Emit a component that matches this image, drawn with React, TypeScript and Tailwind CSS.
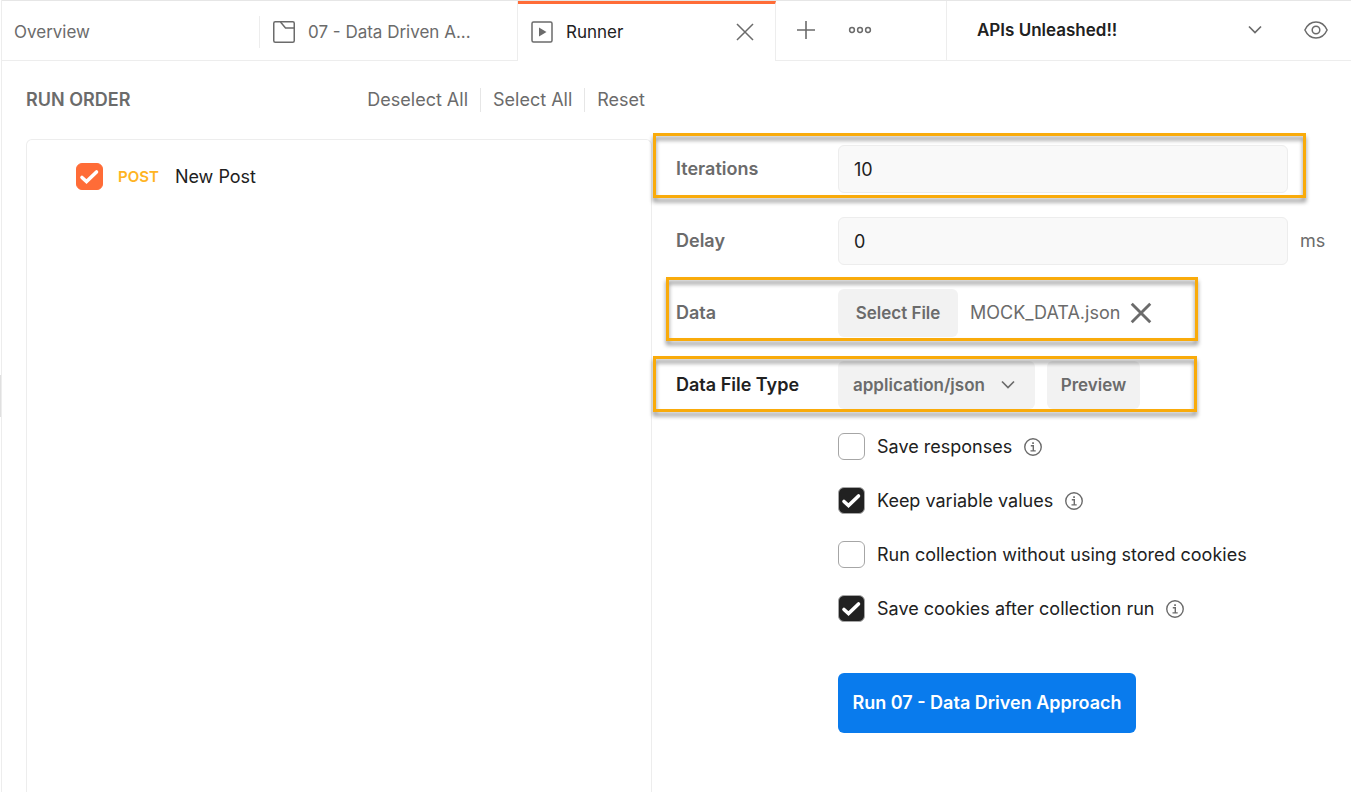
import { useState } from "react";
import type { ReactNode } from "react";
import clsx from "clsx";

type Option = {
  id: string;
  label: string;
  checked: boolean;
  info: boolean;
};

const OPTIONS: Option[] = [
  { id: "save-responses", label: "Save responses", checked: false, info: true },
  { id: "keep-variables", label: "Keep variable values", checked: true, info: true },
  { id: "no-cookies", label: "Run collection without using stored cookies", checked: false, info: false },
  { id: "save-cookies", label: "Save cookies after collection run", checked: true, info: true },
];

function CollectionIcon() {
  return (
    <svg width="22" height="22" viewBox="0 0 22 22" fill="none" stroke="#6b6b6b" strokeWidth="1.5" className="shrink-0">
      <rect x="0.75" y="0.75" width="20.5" height="20.5" rx="1.5" />
      <path d="M7.5 1L12.5 7H21" />
    </svg>
  );
}

function RunnerIcon() {
  return (
    <svg width="22" height="22" viewBox="0 0 22 22" fill="none" className="shrink-0">
      <rect x="1" y="1" width="20" height="20" rx="1.5" stroke="#6b6b6b" strokeWidth="1.5" />
      <path d="M8 6.5L15.5 11L8 15.5Z" fill="#6b6b6b" />
    </svg>
  );
}

function CloseIcon({ size, stroke }: { size: number; stroke: number }) {
  return (
    <svg width={size} height={size} viewBox="0 0 20 20" fill="none" stroke="#6b6b6b" strokeWidth={stroke} strokeLinecap="square">
      <path d="M2.5 2.5L17.5 17.5M17.5 2.5L2.5 17.5" />
    </svg>
  );
}

function ChevronIcon() {
  return (
    <svg width="14" height="10" viewBox="0 0 14 10" fill="none" stroke="#6b6b6b" strokeWidth="1.7">
      <path d="M1 1.5L7 7.5L13 1.5" />
    </svg>
  );
}

function EyeIcon() {
  return (
    <svg width="24" height="18" viewBox="0 0 24 18" fill="none" stroke="#6b6b6b" strokeWidth="1.5">
      <path d="M0.9 9C3.2 4 7.2 1 12 1S20.8 4 23.1 9C20.8 14 16.8 17 12 17S3.2 14 0.9 9Z" />
      <circle cx="12" cy="9" r="3.8" />
    </svg>
  );
}

function InfoIcon() {
  return (
    <svg width="18" height="18" viewBox="0 0 18 18" fill="none" stroke="#6b6b6b" className="shrink-0">
      <circle cx="9" cy="9" r="8.25" strokeWidth="1.4" />
      <path d="M6.8 7.8H9.3V12.7M6.5 12.9H11.7" strokeWidth="1.4" />
      <path d="M8.2 5.2H9.9" strokeWidth="1.7" />
    </svg>
  );
}

function Checkbox({ id, defaultChecked, accent }: { id: string; defaultChecked: boolean; accent: string }) {
  return (
    <span className="grid size-[27px] shrink-0">
      <input
        id={id}
        type="checkbox"
        defaultChecked={defaultChecked}
        className={clsx("peer col-start-1 row-start-1 size-full appearance-none rounded-md border border-[#a6a6a6] bg-white", accent)}
      />
      <svg
        width="27"
        height="27"
        viewBox="0 0 27 27"
        fill="none"
        stroke="white"
        strokeWidth="3.6"
        strokeLinecap="round"
        className="pointer-events-none invisible col-start-1 row-start-1 peer-checked:visible"
      >
        <path d="M6 14.5L10.5 18.5L20.5 9" />
      </svg>
    </span>
  );
}

function Callout({ className }: { className: string }) {
  return (
    <span
      className={clsx(
        "pointer-events-none absolute border-3 border-[#f9ab0b] drop-shadow-[0_4px_2px_rgba(0,0,0,0.45)]",
        className,
      )}
    />
  );
}

function Row({ label, htmlFor, dark, children }: { label: string; htmlFor: string; dark?: boolean; children: ReactNode }) {
  return (
    <div className="relative flex h-12 items-center">
      <label htmlFor={htmlFor} className={clsx("w-[162px] shrink-0 font-semibold", dark ? "text-[#212121]" : "text-[#6b6b6b]")}>
        {label}
      </label>
      {children}
    </div>
  );
}

function TabBar() {
  return (
    <header className="flex h-[61px] border-t border-[#e6e6e6] text-[17px]">
      <nav className="flex">
        <div className="flex w-[258px] items-center border-b border-[#ededed] pt-[2px]">
          <a href="#overview" className="flex h-8 flex-1 items-center border-r border-[#ededed] pl-3 text-[#6b6b6b]">
            Overview
          </a>
        </div>
        <a
          href="#collection"
          className="flex w-[258px] items-center gap-[13px] border-r border-b border-[#ededed] pt-[2px] pl-[13px] text-[#6b6b6b]"
        >
          <CollectionIcon />
          07 - Data Driven A...
        </a>
        <div className="flex w-[258px] items-center justify-between border-t-3 border-r border-t-[#ff6c37] border-r-[#ededed] pr-5 pb-[2px] pl-[13px]">
          <a href="#runner" className="flex items-center gap-[13px] text-[#212121]">
            <RunnerIcon />
            Runner
          </a>
          <button type="button" aria-label="Close tab">
            <CloseIcon size={20} stroke={1.5} />
          </button>
        </div>
      </nav>

      <div className="flex flex-1 items-center gap-8 border-r border-b border-[#ededed] pb-[2px] pl-5">
        <button type="button" aria-label="New tab">
          <svg width="20" height="20" viewBox="0 0 20 20" stroke="#6b6b6b" strokeWidth="1.6">
            <path d="M10 1V19M1 10H19" />
          </svg>
        </button>
        <button type="button" aria-label="More tabs">
          <svg width="24" height="8" viewBox="0 0 24 8" fill="none" stroke="#6b6b6b" strokeWidth="1.5">
            <circle cx="4" cy="4" r="2.4" />
            <circle cx="12" cy="4" r="2.4" />
            <circle cx="20" cy="4" r="2.4" />
          </svg>
        </button>
      </div>

      <div className="flex w-[404px] items-center border-b border-[#ededed] pr-[23px] pb-[2px] pl-[30px]">
        <button type="button" className="flex flex-1 items-center justify-between font-semibold text-[#212121]">
          APIs Unleashed!!
          <ChevronIcon />
        </button>
        <button type="button" aria-label="Environment quick look" className="ml-[42px]">
          <EyeIcon />
        </button>
      </div>
    </header>
  );
}

function RunOrder() {
  return (
    <section className="flex flex-col pl-6">
      <div className="flex h-[78px] items-center justify-between pr-[7px] text-[#6b6b6b]">
        <h2 className="font-semibold">RUN ORDER</h2>
        <div className="flex divide-x divide-[#e6e6e6]">
          <button type="button" className="pr-3">Deselect All</button>
          <button type="button" className="px-3">Select All</button>
          <button type="button" className="pl-3">Reset</button>
        </div>
      </div>
      <div className="flex-1 rounded-t-md border border-b-0 border-[#ededed] pt-[23px] pl-[49px]">
        <label htmlFor="new-post" className="flex items-center">
          <Checkbox id="new-post" defaultChecked accent="checked:border-[#ff6c37] checked:bg-[#ff6c37]" />
          <span className="ml-[15px] text-[15px] font-semibold text-[#ffb422]">POST</span>
          <span className="ml-4">New Post</span>
        </label>
      </div>
    </section>
  );
}

function RunSettings() {
  const [iterations, setIterations] = useState("10");
  const [delay, setDelay] = useState("0");

  return (
    <form className="flex flex-col gap-6 px-6 pt-[84px]">
      <Row label="Iterations" htmlFor="iterations">
        <input
          id="iterations"
          value={iterations}
          onChange={(e) => setIterations(e.target.value)}
          className="mr-[39px] h-12 min-w-0 flex-1 rounded-md border border-[#ededed] bg-[#f9f9f9] px-[15px]"
        />
        <Callout className="-top-3 right-[21px] -bottom-[5px] -left-[23px]" />
      </Row>

      <Row label="Delay" htmlFor="delay">
        <input
          id="delay"
          value={delay}
          onChange={(e) => setDelay(e.target.value)}
          className="h-12 min-w-0 flex-1 rounded-md border border-[#ededed] bg-[#f9f9f9] px-[15px]"
        />
        <span className="w-[39px] pl-3 text-[#6b6b6b]">ms</span>
      </Row>

      <Row label="Data" htmlFor="data-file">
        <button
          id="data-file"
          type="button"
          className="h-12 w-[120px] rounded-md bg-[#f2f2f2] text-[17px] font-semibold text-[#6b6b6b]"
        >
          Select File
        </button>
        <span className="ml-3 text-[#6b6b6b]">MOCK_DATA.json</span>
        <button type="button" aria-label="Remove file" className="ml-[10px]">
          <CloseIcon size={22} stroke={2.6} />
        </button>
        <Callout className="-top-3 -bottom-1 -left-[10px] w-[532px]" />
      </Row>

      <Row label="Data File Type" htmlFor="file-type" dark>
        <span className="grid w-[197px] items-center">
          <select
            id="file-type"
            className="col-start-1 row-start-1 h-12 appearance-none rounded-md bg-[#f2f2f2] pl-[15px] text-[17px] font-semibold text-[#6b6b6b]"
          >
            <option>application/json</option>
            <option>text/csv</option>
          </select>
          <span className="pointer-events-none col-start-1 row-start-1 mr-5 justify-self-end">
            <ChevronIcon />
          </span>
        </span>
        <button type="button" className="ml-3 h-12 w-[93px] rounded-md bg-[#f2f2f2] text-[17px] font-semibold text-[#6b6b6b]">
          Preview
        </button>
        <Callout className="-top-[5px] -bottom-[3px] -left-[23px] w-[544px]" />
      </Row>

      <div className="flex flex-col items-start gap-[27px] pl-[162px]">
        {OPTIONS.map((option) => (
          <div key={option.id} className="flex items-center gap-3">
            <Checkbox id={option.id} defaultChecked={option.checked} accent="checked:bg-[#212121]" />
            <label htmlFor={option.id}>{option.label}</label>
            {option.info && <InfoIcon />}
          </div>
        ))}
      </div>

      {/* Submit */}
      <div className="pt-[27px] pl-[162px]">
        <button type="button" className="h-[60px] w-[298px] rounded-md bg-[#097bed] font-semibold text-white">
          Run 07 - Data Driven Approach
        </button>
      </div>
    </form>
  );
}

export default function App() {
  return (
    <div className="flex min-h-screen bg-white font-['Inter',sans-serif] text-[18px] leading-6 text-[#212121]">
      {/* Sidebar resize handle */}
      <div className="flex w-[2px] items-center border-r border-[#ededed]">
        <div className="h-[42px] w-px bg-[#e0e0e0]" />
      </div>
      <div className="flex min-w-0 flex-1 flex-col">
        <TabBar />
        <main className="grid flex-1 grid-cols-[minmax(0,650fr)_minmax(0,699fr)]">
          <RunOrder />
          <RunSettings />
        </main>
      </div>
    </div>
  );
}
